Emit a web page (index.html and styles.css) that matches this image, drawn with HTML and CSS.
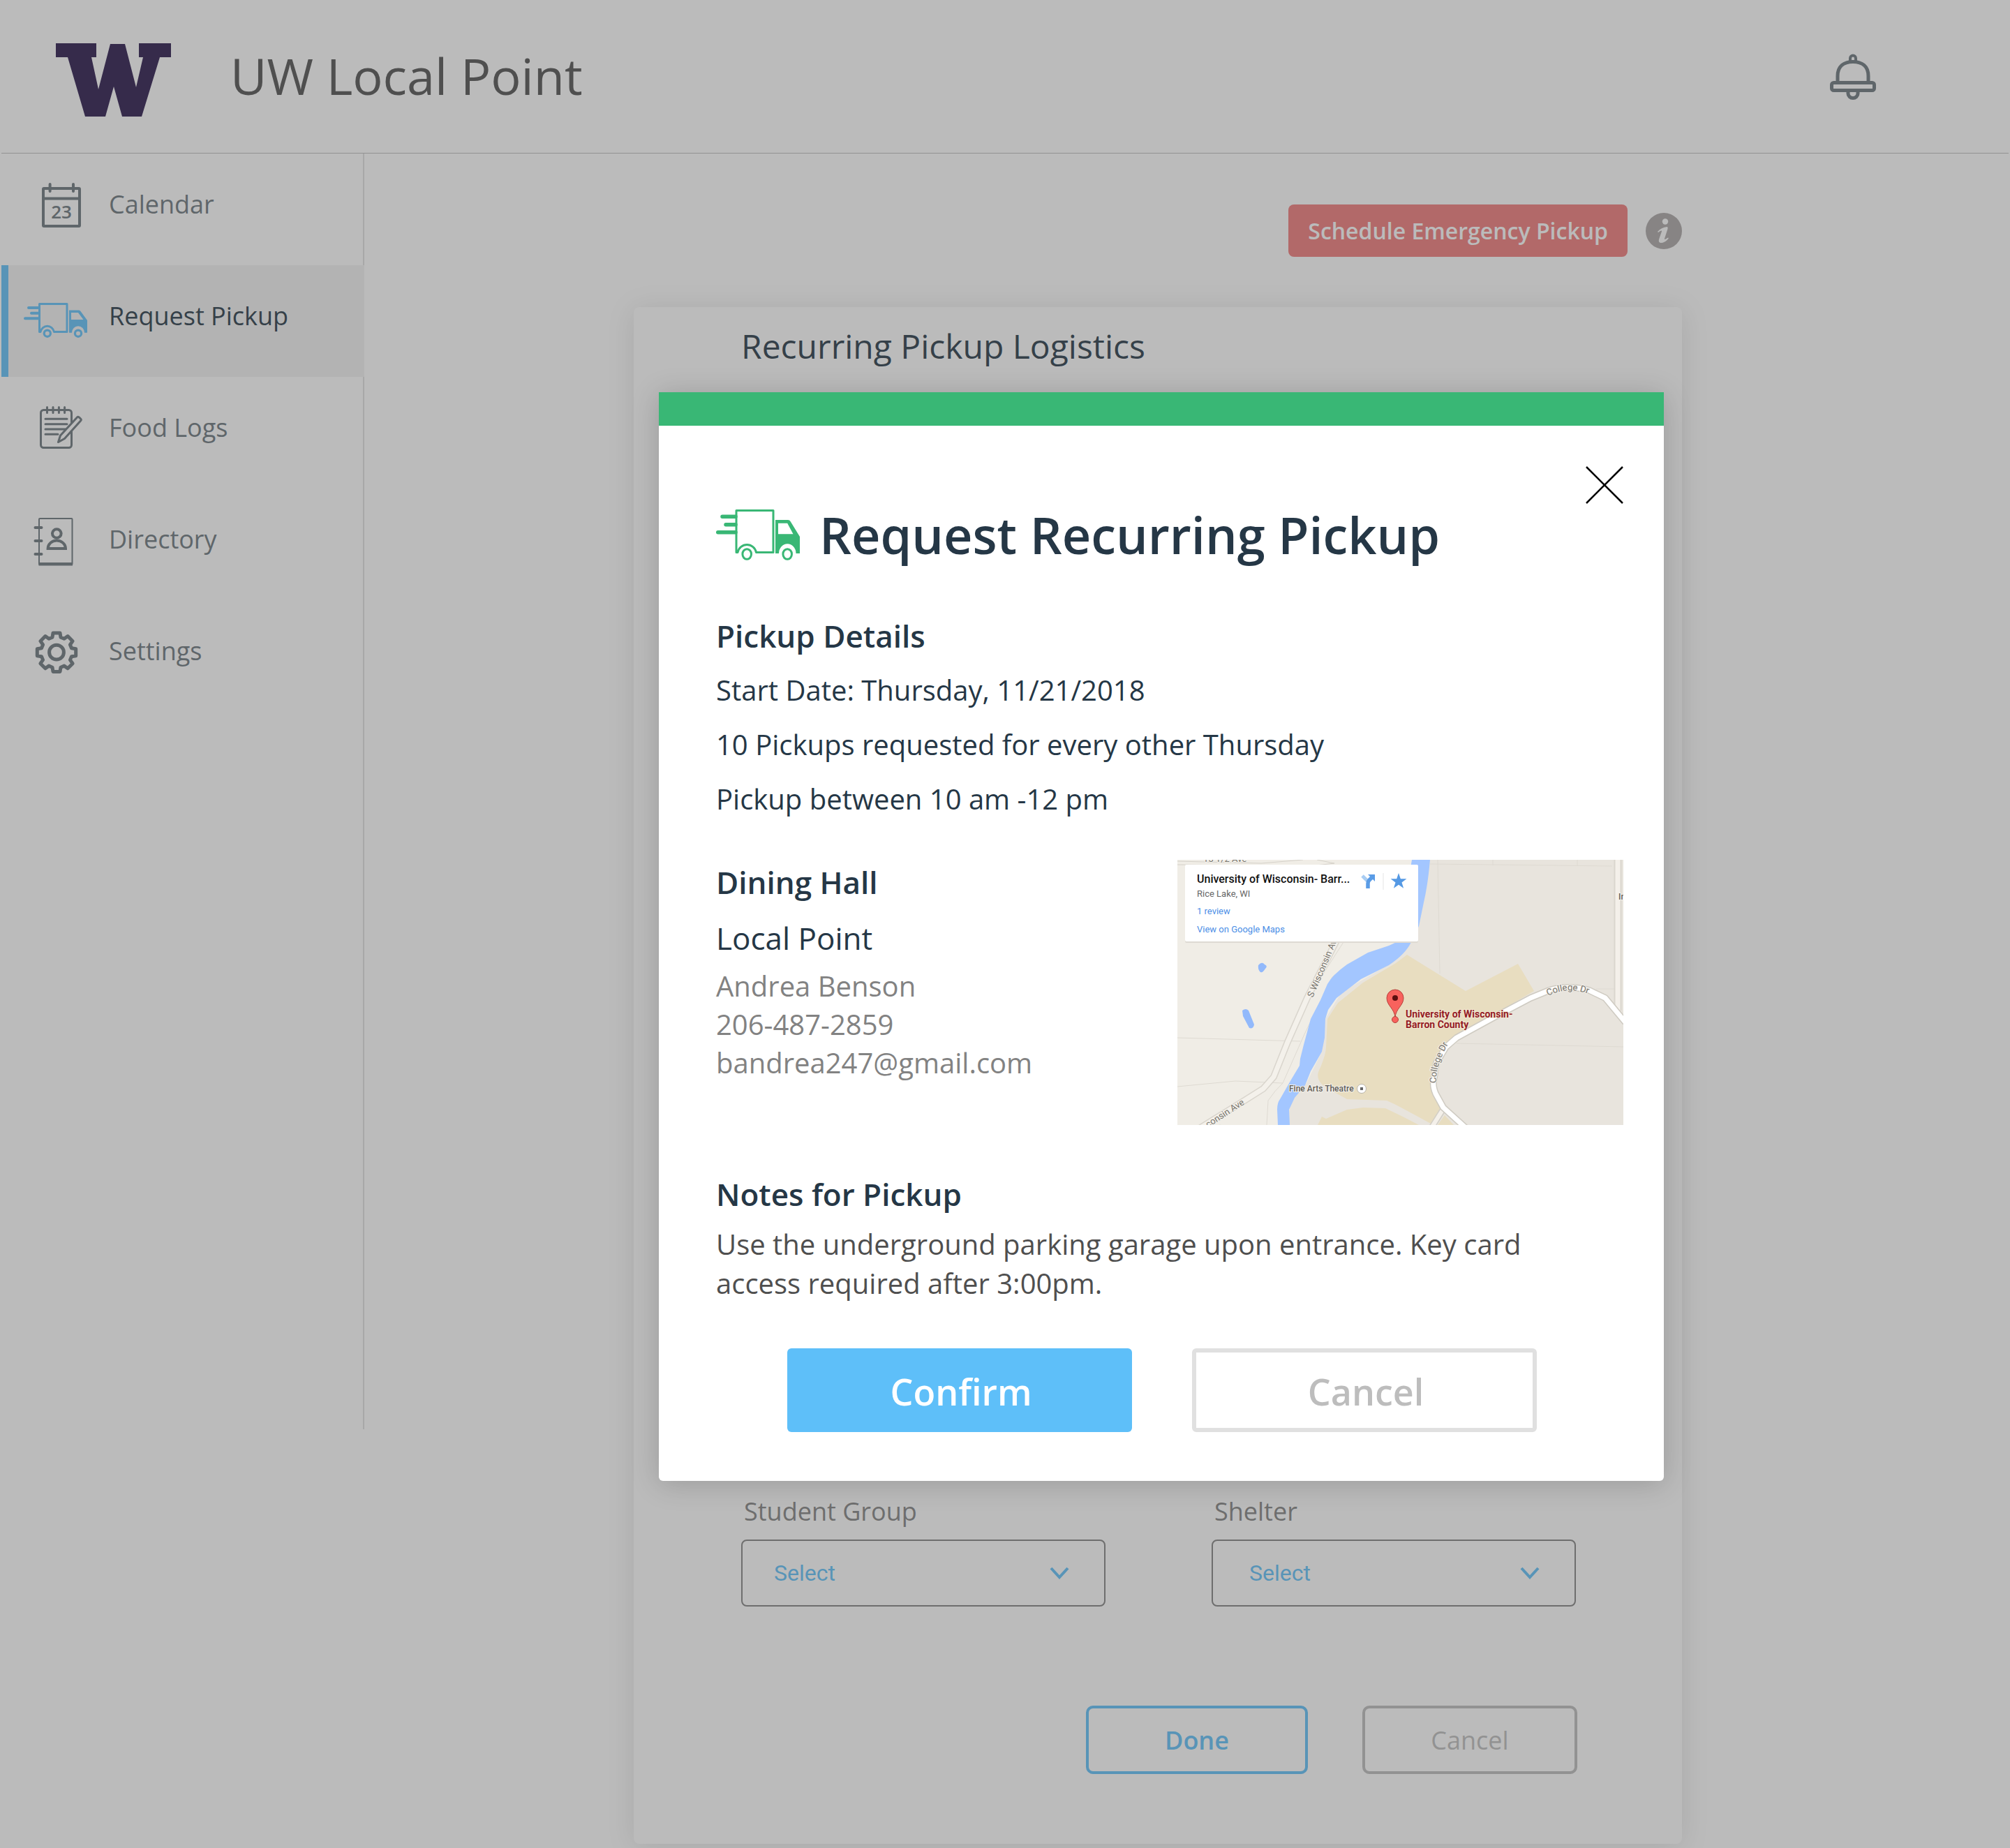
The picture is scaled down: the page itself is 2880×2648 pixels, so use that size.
FILE: index.html
```html
<!DOCTYPE html>
<html lang="en">
<head>
<meta charset="utf-8">
<meta name="viewport" content="width=device-width, initial-scale=1">
<title>UW Local Point</title>
<link rel="stylesheet" href="styles.css">
</head>
<body>
<div class="page">
  <header class="header">
    <svg class="logo" viewBox="0 -10 165 115" role="img" aria-label="University of Washington">
      <path fill="#261449" d="M0 0H58V20H51L61 66L78 1H99L115 63L125 20H119V0H165V20H149L123 105H95L83 62L71 105H42L17 20H0Z"/>
    </svg>
    <h1 class="header-title">UW Local Point</h1>
    <button class="icon-button bell" type="button" aria-label="Notifications">
      <svg viewBox="0 0 66 66" width="66" height="66" fill="none" stroke="#69747b" stroke-width="5">
        <path d="M29 11V6.500a4 4 0 0 1 8 0V11" stroke-width="4"/>
        <path d="M11 40V32C11 18 20 11.500 33 11.500S55 18 55 32V40"/>
        <rect x="2.500" y="41.500" width="61" height="11" rx="3" stroke-width="5"/>
        <path d="M26 54v3a7 6.500 0 0 0 14 0v-3"/>
      </svg>
    </button>
  </header>

  <div class="layout">
    <nav class="sidebar" aria-label="Main">
      <a class="nav-link" href="#calendar">
        <svg class="nav-icon" viewBox="30 33 100 80">
          <g fill="none" stroke="#69747b" stroke-width="4" stroke-linecap="round">
            <rect x="62" y="50" width="52" height="54" rx="1"/>
            <path d="M62 64.500H114M71.600 44V54M105 44V54"/>
          </g>
          <text class="cal-day" x="88" y="93" text-anchor="middle">23</text>
        </svg>
        <span>Calendar</span>
      </a>
      <a class="nav-link nav-link-active" href="#request" aria-current="page">
        <svg class="nav-icon" viewBox="30 33 100 80">
          <g fill="none" stroke="#5ebff9" stroke-width="3">
            <path d="M41 61H55M45 68.700H55M36 76.300H55" stroke-width="4" stroke-linecap="round"/>
            <path stroke-linejoin="round" d="M56.500 95.500V55.500H96V95.500H77.500A10 10.500 0 0 0 58 95.500Z"/>
            <circle cx="67.800" cy="97.700" r="4.600" stroke-width="3.200"/>
            <circle cx="112" cy="97.700" r="4.600" stroke-width="3.200"/>
          </g>
          <path fill="#5ebff9" fill-rule="evenodd" d="M99 64.500H113Q114.500 64.500 115.500 66L125 79V96.700H121A9 9.500 0 0 0 103 96.700H99ZM102 68V78H119.500L112 68Z"/>
        </svg>
        <span>Request Pickup</span>
      </a>
      <a class="nav-link" href="#logs">
        <svg class="nav-icon" viewBox="30 33 100 80">
          <g fill="none" stroke="#69747b" stroke-width="3" stroke-linecap="round" stroke-linejoin="round">
            <rect x="58.500" y="47.500" width="44" height="54" rx="4"/>
            <path d="M67.500 43.500V51.500M76 43.500V51.500M84.400 43.500V51.500M92.600 43.500V51.500M65 60.300H96M65 67.700H96M65 75H95M65 82.300H83"/>
            <path fill="#fff" d="M83.500 93.500L86.500 84L110.500 58Q112 56.500 114 58.500L115.500 60Q117 61.500 115.500 63L92.500 88.500Z"/>
          </g>
        </svg>
        <span>Food Logs</span>
      </a>
      <a class="nav-link" href="#directory">
        <svg class="nav-icon" viewBox="30 33 100 80">
          <g fill="none" stroke="#69747b" stroke-width="4">
            <rect x="56" y="43" width="47.500" height="66" rx="1" stroke-width="2"/>
            <path d="M55.500 108.300H104" stroke-width="4.500"/>
            <path d="M50.500 56H59.500M50.500 75H59.500M50.500 94H59.500" stroke-linecap="round"/>
            <circle cx="81.300" cy="64.500" r="6.300"/>
            <path d="M68.600 86a12.700 11.500 0 0 1 25.400 0z"/>
          </g>
        </svg>
        <span>Directory</span>
      </a>
      <a class="nav-link" href="#settings">
        <svg class="nav-icon" viewBox="-51 -41.700 100 80">
          <g fill="none" stroke="#69747b" stroke-width="5" stroke-linejoin="round">
            <path d="M-6-21.500L-5-27.700H5L6-21.500L10.960-19.440L16.050-23.120L23.120-16.050L19.440-10.960L21.500-6L27.700-5V5L21.500 6L19.440 10.960L23.120 16.050L16.050 23.120L10.960 19.440L6 21.500L5 27.700H-5L-6 21.500L-10.960 19.440L-16.050 23.120L-23.120 16.050L-19.440 10.960L-21.500 6L-27.700 5V-5L-21.500-6L-19.440-10.960L-23.120-16.050L-16.050-23.120L-10.960-19.440Z"/>
            <circle r="10.400"/>
          </g>
        </svg>
        <span>Settings</span>
      </a>
    </nav>

    <main class="main">
      <div class="toolbar">
        <button class="emergency" type="button">Schedule Emergency Pickup</button>
        <button class="icon-button info" type="button" aria-label="About emergency pickups">
          <svg viewBox="0 0 52 52" width="52" height="52">
            <circle cx="26" cy="26" r="26" fill="#aaa6a6"/>
            <circle cx="28" cy="12.500" r="4.200" fill="#fff"/>
            <path fill="#fff" d="M17 27q5-6 14-7q1 1 .500 3l-4.500 14q-.500 2.500 5-1.500q1 0 .500 1.500q-5 6-11 6q-3.500-.500-2.500-5l4-11.500q.500-2.500-5 1.500z"/>
          </svg>
        </button>
      </div>

      <form class="card">
        <h2 class="card-title">Recurring Pickup Logistics</h2>
        <div class="fields">
          <div class="field">
            <label for="group">Student Group</label>
            <div class="select-box">
              <select class="select" id="group"><option>Select</option></select>
              <svg class="chevron" viewBox="0 0 28 18" width="28" height="18"><path d="M2 2L14 15L26 2" fill="none" stroke="#5ebff9" stroke-width="4"/></svg>
            </div>
          </div>
          <div class="field">
            <label for="shelter">Shelter</label>
            <div class="select-box">
              <select class="select select-wide" id="shelter"><option>Select</option></select>
              <svg class="chevron" viewBox="0 0 28 18" width="28" height="18"><path d="M2 2L14 15L26 2" fill="none" stroke="#5ebff9" stroke-width="4"/></svg>
            </div>
          </div>
        </div>
        <div class="card-actions">
          <button class="outline-button done" type="button">Done</button>
          <button class="outline-button" type="button">Cancel</button>
        </div>
      </form>
    </main>
  </div>

  <div class="overlay">
    <section class="modal" role="dialog" aria-modal="true" aria-labelledby="modal-title">
      <div class="modal-top">
        <button class="icon-button" type="button" aria-label="Close">
          <svg viewBox="0 0 54 54" width="54" height="54"><path d="M1 1L53 53M53 1L1 53" stroke="#000" stroke-width="2.500"/></svg>
        </button>
      </div>
      <div class="modal-heading">
        <svg viewBox="0 0 120 73" width="120" height="73">
          <g fill="none" stroke="#39b775" stroke-width="3">
            <path d="M9 10.300H28M14 21.700H28M2.700 32.700H28" stroke-width="5.500" stroke-linecap="round"/>
            <path stroke-linejoin="round" d="M29 61.500V1.500H82V61.500H57.500A13.500 13.500 0 0 0 31 61.500Z"/>
            <ellipse cx="44.200" cy="64" rx="6.300" ry="7.300"/>
            <ellipse cx="102.200" cy="64" rx="6.300" ry="7.300"/>
          </g>
          <path fill="#39b775" fill-rule="evenodd" d="M85 15H103Q105.500 15 106.500 17L120 39V63H114.500A12 13.500 0 0 0 90 63H85ZM89 19.700V35.300H110.500L102.200 19.700Z"/>
        </svg>
        <h2 class="modal-title" id="modal-title">Request Recurring Pickup</h2>
      </div>

      <h3 class="section-title">Pickup Details</h3>
      <ul class="details">
        <li>Start Date: Thursday, 11/21/2018</li>
        <li>10 Pickups requested for every other Thursday</li>
        <li>Pickup between 10 am -12 pm</li>
      </ul>

      <div class="location">
        <div class="contact">
          <h3 class="section-title">Dining Hall</h3>
          <p class="hall">Local Point</p>
          <address class="address">Andrea Benson<br>206-487-2859<br>bandrea247@gmail.com</address>
        </div>
        <svg class="map" viewBox="0 0 639 380" role="img" aria-label="Map of the pickup location">
          <defs>
            <path id="college-top" d="M531 195Q545 188 562 187Q578 187 596 195"/>
            <path id="college-side" d="M371 320Q370 294 388 264"/>
          </defs>
          <rect width="639" height="380" fill="#f0ede6"/>
          <path fill="#e8e4dd" d="M350 0H639V380H155L165 340L185 320L207 275L212 228L235 190L313 144Z"/>
          <g fill="none" stroke="#dedad2" stroke-width="1">
            <path d="M0 255L176 260M0 325L83 317L151 320M128 380L130 345Q140 330 151 320L182 250L222 168L232 160M130 320L195 185L238 118M60 380L73 382M373 0L376 163M362 6L623 9M400 263L639 268M452 0V8M573 0V9M600 185H627"/>
            <path d="M0 2L120 5L180 0M0 7L190 9L225 5L200 0" stroke="#d5d1c9"/>
          </g>
          <path fill="#e8ddc0" d="M313 148L329 136L413 188L488 149L511 188L446 226L400 253L380 271L368 295L365 318L370 341L380 358L363 378L313 351L300 345L243 343L216 328Q198 318 202 304Q213 280 213 268L215 228L230 205L266 176Z"/>
          <path fill="#e8ddc0" d="M201 380L207 368L213 371L243 358L266 355L298 356L323 368L346 380ZM373 380L383 366L396 380Z"/>
          <path fill="#a3c6ff" d="M336 0H362Q359 35 353 61L346 95L335 118Q327 135 303 151L263 171L228 198L216 215L212 228L211 255L207 275L191 303L183 323L168 341L160 358L161 380H144L143 358Q143 348 147 343L163 315L175 295L176 285L181 265L191 228L205 201L215 178Q222 165 243 150L273 133L303 123L316 117Z"/>
          <path fill="#92b9fb" d="M116 151q5-6 9-1q5 2 1 6q-5 8-8 4q-3-4-2-9zM93 216q5-4 9 0l8 20q-1 7-7 5l-9-17z"/>
          <path d="M229 114L186 198L158 261L138 311L123 328L96 345L33 384" fill="none" stroke="#d9d5cd" stroke-width="10"/>
          <path d="M229 114L186 198L158 261L138 311L123 328L96 345L33 384" fill="none" stroke="#f4f1eb" stroke-width="7"/>
          <path d="M631 0V216" fill="none" stroke="#dad6ce" stroke-width="11"/>
          <path d="M631 0V216" fill="none" stroke="#f4f0ea" stroke-width="7"/>
          <path d="M381 357L364 384" fill="none" stroke="#d3cfc6" stroke-width="9"/>
          <path d="M381 357L364 384" fill="none" stroke="#f4f0ea" stroke-width="6"/>
          <path d="M413 384L381 355L370 335Q366 325 367 318L371 291L385 268L400 255L453 226L506 198L533 187Q546 183 560 183Q576 183 590 187L613 198L642 233" fill="none" stroke="#cfcbc2" stroke-width="10" stroke-linejoin="round"/>
          <path d="M413 384L381 355L370 335Q366 325 367 318L371 291L385 268L400 255L453 226L506 198L533 187Q546 183 560 183Q576 183 590 187L613 198L642 233" fill="none" stroke="#fff" stroke-width="7" stroke-linejoin="round"/>
          <g class="map-label">
            <text transform="translate(194 198) rotate(-67)">S Wisconsin Ave</text>
            <text transform="translate(44 384) rotate(-33)">consin Ave</text>
            <text><textPath href="#college-top">College Dr</textPath></text>
            <text><textPath href="#college-side">College Dr</textPath></text>
            <text x="37" y="3">15 1/2 Ave</text>
            <text class="map-place" x="632" y="57">In</text>
            <text class="map-place" x="160" y="332">Fine Arts Theatre</text>
          </g>
          <circle cx="264" cy="328" r="6.500" fill="#fff" stroke="#b9b4aa"/>
          <rect x="262" y="326" width="4" height="4" fill="#666"/>
          <g class="map-target">
            <text x="327" y="226">University of Wisconsin-</text>
            <text x="327" y="241">Barron County</text>
          </g>
          <path d="M312 226C311 213 300 209 300 198A12 12 0 0 1 324 198C324 209 313 213 312 226Z" fill="#f8625d" stroke="#b5423d"/>
          <circle cx="312" cy="229" r="4.500" fill="#f8625d" stroke="#b5423d"/>
          <circle cx="312" cy="198" r="4" fill="#5c0f0f"/>
          <rect x="11" y="8" width="334" height="111" rx="2" fill="#dedad3"/>
          <rect x="11" y="7" width="334" height="110" rx="2" fill="#fff"/>
          <text class="place-name" x="28" y="33">University of Wisconsin- Barr...</text>
          <text class="place-city" x="28" y="53">Rice Lake, WI</text>
          <a href="#review"><text class="place-link" x="28" y="78">1 review</text></a>
          <a href="#maps"><text class="place-link" x="28" y="104">View on Google Maps</text></a>
          <path d="M265 23L273 31" stroke="#a9cdf3" stroke-width="5"/>
          <path d="M273 41V34Q273 31 275 29L279 25" fill="none" stroke="#5a9ce6" stroke-width="5.500"/>
          <path d="M273 21H283V31Z" fill="#5a9ce6"/>
          <path d="M295 19V43" stroke="#e5e5e5"/>
          <path d="M317 19L319.800 27.200L328.400 27.300L321.500 32.500L324.100 40.700L317 35.800L309.900 40.700L312.500 32.500L305.600 27.300L314.200 27.200Z" fill="#5599e4"/>
        </svg>
      </div>

      <div class="notes">
        <h3 class="section-title">Notes for Pickup</h3>
        <p class="notes-text">Use the underground parking garage upon entrance. Key card access required after 3:00pm.</p>
      </div>

      <div class="modal-actions">
        <button class="action confirm" type="button">Confirm</button>
        <button class="action cancel" type="button">Cancel</button>
      </div>
    </section>
  </div>
</div>
</body>
</html>
```
FILE: styles.css
```css
* {
  box-sizing: border-box;
}

body {
  margin: 0;
  background: #fff;
  color: #253746;
  font-family: "Open Sans", "Noto Sans", sans-serif;
}

h1, h2, h3, p, ul {
  margin: 0;
  padding: 0;
  font-weight: 400;
}

button, select {
  font-family: inherit;
  cursor: pointer;
}

svg {
  display: block;
  flex: none;
}

.page {
  position: relative;
  display: flex;
  flex-direction: column;
  min-height: 100vh;
}

.icon-button {
  padding: 0;
  border: 0;
  background: none;
}

/* Header */

.header {
  display: flex;
  align-items: center;
  gap: 85px;
  height: 220px;
  margin: 0 2px;
  padding: 0 190px 0 78px;
  border-bottom: 1px solid #bdbdbd;
}

.logo {
  width: 165px;
  height: 115px;
}

.header-title {
  padding-bottom: 4px;
  color: #4f4f4f;
  font-size: 72px;
  line-height: 96px;
}

.bell {
  margin-left: auto;
}

/* Sidebar */

.layout {
  display: flex;
  flex: 1;
}

.sidebar {
  flex: none;
  align-self: flex-start;
  width: 522px;
  min-height: 1828px;
  padding-left: 2px;
  background: linear-gradient(#e0e0e0, #e0e0e0) right / 2px 100% no-repeat;
}

.nav-link {
  display: flex;
  align-items: center;
  gap: 26px;
  height: 160px;
  padding: 0 0 14px 18px;
  border-left: 10px solid transparent;
  color: #69747b;
  font-size: 36px;
  line-height: 50px;
  text-decoration: none;
}

.nav-link-active {
  border-left-color: #5ebff9;
  background: #f2f2f2;
  color: #253746;
}

.nav-icon {
  width: 100px;
  height: 80px;
}

.cal-day {
  fill: #69747b;
  font-size: 26px;
  font-weight: 600;
}

/* Main column */

.main {
  display: flex;
  flex: 1;
  flex-direction: column;
  gap: 72px;
  padding: 73px 470px 6px 386px;
}

.toolbar {
  display: flex;
  align-items: center;
  justify-content: flex-end;
  gap: 26px;
}

.emergency {
  height: 75px;
  padding: 0 28px;
  border: 0;
  border-radius: 8px;
  background: #f07979;
  color: #fff;
  font-size: 32px;
  font-weight: 600;
}

.card {
  display: flex;
  flex: 1;
  flex-direction: column;
  padding: 23px 150px 100px 154px;
  border-radius: 8px;
  background: #fff;
  box-shadow: 0 4px 40px rgba(0, 0, 0, 0.12);
}

.card-title {
  font-size: 48px;
  line-height: 66px;
}

.fields {
  display: grid;
  grid-template-columns: 1fr 1fr;
  gap: 152px;
  margin-top: auto;
  padding-right: 2px;
}

.field {
  display: flex;
  flex-direction: column;
  gap: 15px;
  color: #828282;
  font-size: 36px;
  line-height: 50px;
}

.field label {
  padding-left: 4px;
}

.select-box {
  display: grid;
  align-items: center;
}

.select-box > * {
  grid-area: 1 / 1;
}

.select {
  width: 100%;
  height: 96px;
  padding: 0 45px;
  border: 2px solid #828282;
  border-radius: 8px;
  background: none;
  color: #5ebff9;
  font-family: Roboto, sans-serif;
  font-size: 32px;
  appearance: none;
}

.select-wide {
  padding: 0 52px;
}

.chevron {
  justify-self: end;
  margin-right: 52px;
  pointer-events: none;
}

.card-actions {
  display: flex;
  justify-content: flex-end;
  gap: 78px;
  margin-top: 142px;
}

.outline-button {
  width: 308px;
  height: 98px;
  border: 4px solid #bdbdbd;
  border-radius: 10px;
  background: none;
  color: #bdbdbd;
  font-size: 36px;
}

.done {
  width: 318px;
  border-color: #5ebff9;
  color: #5ebff9;
  font-weight: 600;
}

/* Dialog */

.overlay {
  position: absolute;
  inset: 0;
  display: flex;
  align-items: flex-start;
  padding: 562px 496px 80px 944px;
  background: rgba(79, 79, 79, 0.39);
}

.modal {
  flex: 1;
  padding: 58px 58px 70px 82px;
  border-top: 48px solid #39b775;
  border-radius: 0 0 6px 6px;
  background: #fff;
  box-shadow: 0 4px 40px rgba(0, 0, 0, 0.18);
}

.modal-top {
  display: flex;
  justify-content: flex-end;
}

.modal-heading {
  display: flex;
  align-items: center;
  gap: 28px;
  margin-bottom: 69px;
}

.modal-title {
  font-size: 72px;
  font-weight: 600;
  line-height: 88px;
}

.section-title {
  font-size: 44px;
  font-weight: 600;
  line-height: 64px;
}

.details {
  margin-top: 7px;
  font-size: 40px;
  line-height: 78px;
  list-style: none;
}

.location {
  display: flex;
  justify-content: space-between;
  margin-top: 48px;
}

.hall {
  margin-top: 16px;
  font-size: 44px;
  line-height: 64px;
}

.address {
  margin-top: 9px;
  color: #828282;
  font-size: 40px;
  font-style: normal;
  line-height: 55px;
}

.map {
  width: 639px;
  height: 380px;
  overflow: hidden;
  font-family: Roboto, sans-serif;
}

.map-label {
  fill: #77746d;
  stroke: #f4f1eb;
  stroke-width: 2px;
  paint-order: stroke;
  font-size: 13px;
}

.map-place {
  fill: #5f5c56;
  font-size: 12px;
  font-weight: 500;
}

.map-target {
  fill: #941b24;
  stroke: #f1e8d2;
  stroke-width: 2px;
  paint-order: stroke;
  font-size: 14px;
  font-weight: 700;
}

.place-name {
  fill: #111;
  font-size: 16px;
  font-weight: 500;
}

.place-city {
  fill: #666;
  font-size: 13px;
}

.place-link {
  fill: #4b8ee6;
  font-size: 13px;
}

.notes {
  margin-top: 67px;
}

.notes-text {
  max-width: 1200px;
  margin-top: 12px;
  color: #4f4f4f;
  font-size: 40px;
  line-height: 56px;
}

.modal-actions {
  display: flex;
  justify-content: center;
  gap: 86px;
  margin-top: 65px;
  padding-right: 22px;
}

.action {
  width: 494px;
  height: 120px;
  padding: 2px 0 0 4px;
  border: 0;
  border-radius: 6px;
  font-size: 52px;
  font-weight: 600;
}

.confirm {
  background: #5ebff9;
  color: #fff;
}

.cancel {
  border: 6px solid #e0e0e0;
  background: #fff;
  color: #bdbdbd;
}
```
